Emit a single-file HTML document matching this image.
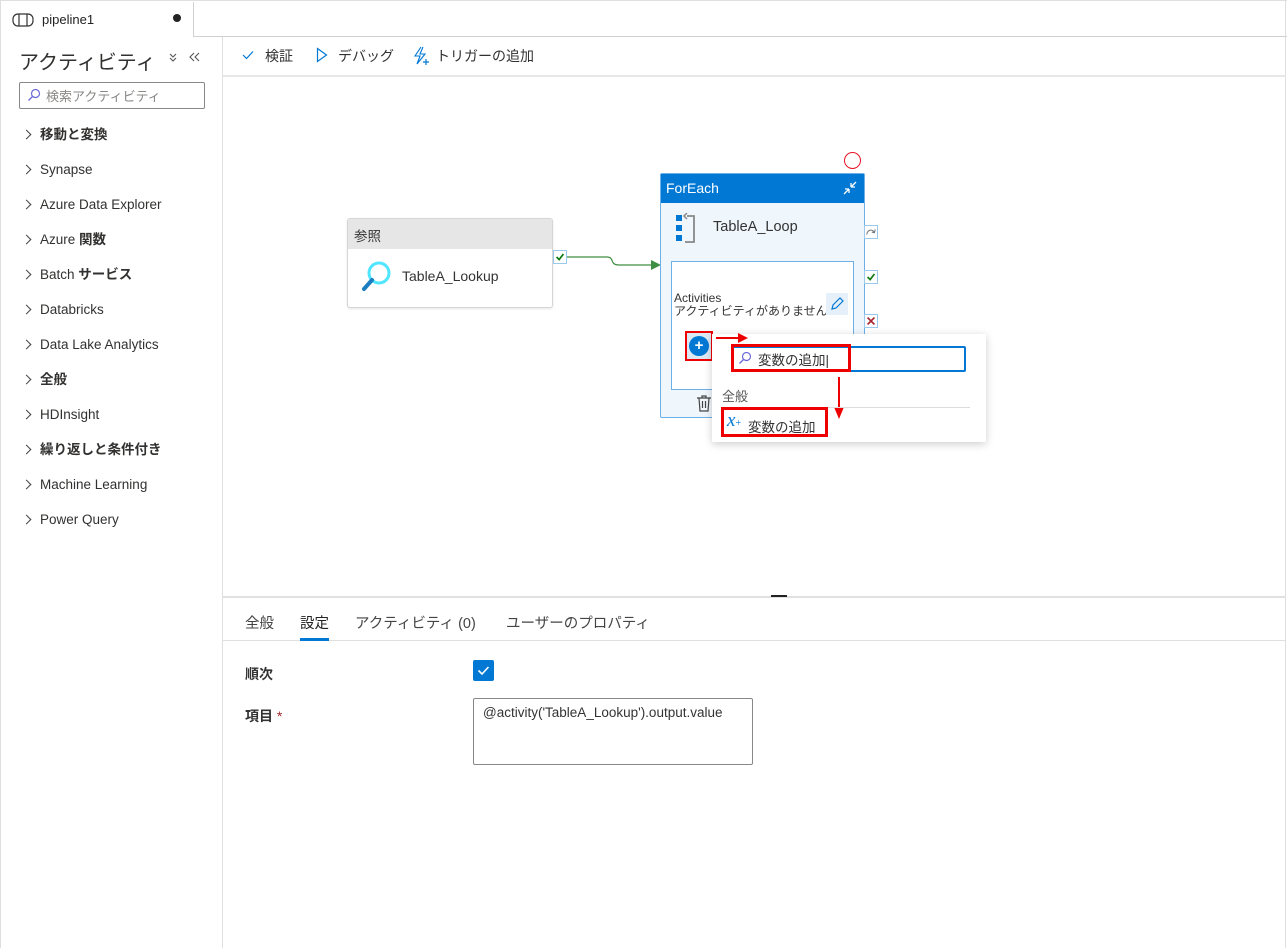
<!DOCTYPE html>
<html><head><meta charset="utf-8"><style>
*{box-sizing:border-box;margin:0;padding:0}
body{width:1287px;height:948px;background:#fff;font-family:"Liberation Sans","Noto Sans CJK JP",sans-serif;color:#323130;position:relative;overflow:hidden;font-size:14px}
.a{position:absolute}
.it{height:35px;line-height:35px;position:relative;padding-left:18px}
.it:before{content:"";position:absolute;left:1px;top:14px;width:6px;height:6px;border-right:1.3px solid #444;border-top:1.3px solid #444;transform:rotate(45deg)}
.cb{width:14px;height:14px;border:1px solid #9cc8ee;background:#fff}
</style></head><body>
<div class="a" style="left:0;top:0;width:1287px;height:1px;background:#e1dfdd"></div>
<div class="a" style="left:0;top:0;width:1px;height:948px;background:#e1dfdd"></div>
<div class="a" style="left:1285px;top:0;width:1px;height:948px;background:#e1dfdd"></div>
<div class="a" style="left:193px;top:36px;width:1094px;height:1px;background:#d0d0d0"></div>
<div class="a" style="left:193px;top:2px;width:1px;height:35px;background:#d0d0d0"></div>
<svg class="a" style="left:12px;top:13px" width="22" height="14" viewBox="0 0 22 14"><rect x="1" y="1" width="20" height="12" rx="5" fill="none" stroke="#333" stroke-width="1.2"/><line x1="7" y1="1" x2="7" y2="13" stroke="#333" stroke-width="1.2"/><line x1="15" y1="1" x2="15" y2="13" stroke="#333" stroke-width="1.2"/></svg>
<div class="a" style="left:42px;top:12px;font-size:13px;color:#222">pipeline1</div>
<div class="a" style="left:173px;top:14px;width:8px;height:8px;border-radius:50%;background:#222"></div>
<div class="a" style="left:222px;top:37px;width:1px;height:911px;background:#e1dfdd"></div>
<div class="a" style="left:19px;top:46px;font-size:20px;color:#323130">アクティビティ</div>
<svg class="a" style="left:167px;top:52px" width="12" height="12" viewBox="0 0 12 12"><path d="M3 2 L6 5 L9 2 M3 6 L6 9 L9 6" fill="none" stroke="#555" stroke-width="1.1"/></svg>
<svg class="a" style="left:187px;top:50px" width="14" height="14" viewBox="0 0 14 14"><path d="M7 3 L3 7 L7 11 M12 3 L8 7 L12 11" fill="none" stroke="#555" stroke-width="1.1"/></svg>
<div class="a" style="left:19px;top:82px;width:186px;height:27px;border:1px solid #8a8886;border-radius:2px"></div>
<svg class="a" style="left:27px;top:88px" width="14" height="14" viewBox="0 0 14 14"><circle cx="8.5" cy="5.5" r="4" fill="none" stroke="#6b69d6" stroke-width="1.2"/><line x1="5.5" y1="8.5" x2="1.5" y2="12.5" stroke="#6b69d6" stroke-width="1.3"/></svg>
<div class="a" style="left:46px;top:86px;font-size:13px;color:#8a8886">検索アクティビティ</div>
<div class="a" style="left:22px;top:117px;font-size:13.5px;color:#323130">
<div class="it"><b>移動と変換</b></div>
<div class="it">Synapse</div>
<div class="it">Azure Data Explorer</div>
<div class="it">Azure <b>関数</b></div>
<div class="it">Batch <b>サービス</b></div>
<div class="it">Databricks</div>
<div class="it">Data Lake Analytics</div>
<div class="it"><b>全般</b></div>
<div class="it">HDInsight</div>
<div class="it"><b>繰り返しと条件付き</b></div>
<div class="it">Machine Learning</div>
<div class="it">Power Query</div>
</div>
<div class="a" style="left:223px;top:75px;width:1063px;height:2px;background:#e8e8e8"></div>
<svg class="a" style="left:242px;top:50px" width="12" height="10" viewBox="0 0 12 10"><path d="M1 5 L4.5 8.5 L11 1.5" fill="none" stroke="#0078d4" stroke-width="1.2"/></svg>
<div class="a" style="left:265px;top:46px;font-size:14px">検証</div>
<svg class="a" style="left:316px;top:47px" width="12" height="16" viewBox="0 0 12 16"><path d="M1.5 1.5 L10.5 8 L1.5 14.5 Z" fill="none" stroke="#0078d4" stroke-width="1.2"/></svg>
<div class="a" style="left:338px;top:46px;font-size:14px">デバッグ</div>
<svg class="a" style="left:412px;top:46px" width="20" height="20" viewBox="0 0 20 20"><path d="M9 1 L3 10 L8 10 L5 18 L13 8 L8 8 L11 1" fill="none" stroke="#0078d4" stroke-width="1.1"/><path d="M14 13v6M11 16h6" stroke="#0078d4" stroke-width="1.2"/></svg>
<div class="a" style="left:436px;top:46px;font-size:14px">トリガーの追加</div>
<div class="a" style="left:347px;top:218px;width:206px;height:90px;border:1px solid #d6d6d6;border-radius:3px;background:#fff;box-shadow:0 1px 2px rgba(0,0,0,.1)">
<div style="height:30px;background:#e6e6e6;padding:6px 6px;font-size:13.5px;color:#333">参照</div>
</div>
<svg class="a" style="left:361px;top:260px" width="32" height="32" viewBox="0 0 32 32"><circle cx="18" cy="13" r="10" fill="none" stroke="#50e6ff" stroke-width="3"/><line x1="11" y1="20" x2="3" y2="29" stroke="#1b7fbf" stroke-width="4" stroke-linecap="round"/></svg>
<div class="a" style="left:402px;top:268px;font-size:14px;color:#333">TableA_Lookup</div>
<svg class="a cb" style="left:553px;top:250px" width="14" height="14" viewBox="0 0 14 14"><path d="M3 7 L6 10 L11 3.5" fill="none" stroke="#107c10" stroke-width="2"/></svg>
<svg class="a" style="left:567px;top:250px" width="96" height="20"><path d="M0 7 H40 C48 7 42 15 52 15 H86" fill="none" stroke="#3e8e41" stroke-width="1.2"/><path d="M84 10 L94 15 L84 20Z" fill="#3e8e41"/></svg>
<div class="a" style="left:844px;top:152px;width:17px;height:17px;border:1.5px solid #e81123;border-radius:50%"></div>
<div class="a" style="left:660px;top:173px;width:205px;height:245px;border:1px solid #6cb0e8;background:#eff6fc;border-radius:2px">
<div style="height:29px;background:#0078d4;color:#fff;font-size:14px;padding:6px 5px">ForEach</div>
</div>
<svg class="a" style="left:841px;top:179px" width="18" height="18" viewBox="0 0 18 18"><path d="M3 15 L8 10 M8 10 H4 M8 10 V14 M15 3 L10 8 M10 8 H14 M10 8 V4" stroke="#fff" stroke-width="1.3" fill="none"/></svg>
<svg class="a" style="left:675px;top:213px" width="24" height="32" viewBox="0 0 24 32"><rect x="1" y="2" width="6" height="6" fill="#0078d4"/><rect x="1" y="12" width="6" height="6" fill="#0078d4"/><rect x="1" y="22" width="6" height="6" fill="#0078d4"/><path d="M12 3 H19 V29 H10" fill="none" stroke="#888" stroke-width="1.8"/><path d="M12 0 L9 3 L12 6" fill="none" stroke="#888" stroke-width="1.5"/></svg>
<div class="a" style="left:713px;top:219px;font-size:14.5px;color:#333">TableA_Loop</div>
<div class="a" style="left:671px;top:261px;width:183px;height:129px;border:1px solid #6cb0e8;background:#fff"></div>
<div class="a" style="left:674px;top:292px;font-size:12px;color:#333;line-height:13px;width:166px;white-space:nowrap;overflow:hidden">Activities<br>アクティビティがありません</div>
<div class="a" style="left:826px;top:293px;width:22px;height:22px;background:#e6f0fa"></div>
<svg class="a" style="left:829px;top:296px" width="16" height="16" viewBox="0 0 16 16"><path d="M3 13 L4 9 L11 2 L14 5 L7 12 Z" fill="none" stroke="#0078d4" stroke-width="1.2"/></svg>
<svg class="a" style="left:696px;top:395px" width="16" height="17" viewBox="0 0 16 17"><path d="M1 3 H15 M6 3 V1 H10 V3 M3 3 L4 16 H12 L13 3 M6.5 6 V13 M9.5 6 V13" fill="none" stroke="#444" stroke-width="1.2"/></svg>
<svg class="a cb" style="left:864px;top:225px" width="14" height="14" viewBox="0 0 14 14"><path d="M2 10 C3 4 9 3 11 8 M11 8 L12 4 M11 8 L8 7" fill="none" stroke="#777" stroke-width="1.2"/></svg>
<svg class="a cb" style="left:864px;top:270px" width="14" height="14" viewBox="0 0 14 14"><path d="M3 7 L6 10 L11 3.5" fill="none" stroke="#107c10" stroke-width="2"/></svg>
<svg class="a cb" style="left:864px;top:314px" width="14" height="14" viewBox="0 0 14 14"><path d="M3 3 L11 11 M11 3 L3 11" fill="none" stroke="#a4262c" stroke-width="2"/></svg>
<div class="a" style="left:685px;top:331px;width:28px;height:30px;border:2px solid #e00;background:#dce8f4"></div>
<div class="a" style="left:689px;top:336px;width:20px;height:20px;border-radius:50%;background:#0078d4;color:#fff;text-align:center;font-weight:bold;font-size:15px;line-height:19px">+</div>
<div class="a" style="left:712px;top:334px;width:274px;height:108px;background:#fff;box-shadow:0 2px 8px rgba(0,0,0,.2)"></div>
<svg class="a" style="left:716px;top:331px" width="34" height="14"><path d="M0 7 H24" stroke="#e00" stroke-width="2"/><path d="M22 2 L32 7 L22 12Z" fill="#e00"/></svg>
<div class="a" style="left:731px;top:346px;width:235px;height:26px;border:2px solid #0078d4;border-radius:2px"></div>
<div class="a" style="left:731px;top:344px;width:120px;height:28px;border:3px solid #e00"></div>
<svg class="a" style="left:738px;top:351px" width="14" height="14" viewBox="0 0 14 14"><circle cx="8.5" cy="5.5" r="4" fill="none" stroke="#6b69d6" stroke-width="1.2"/><line x1="5.5" y1="8.5" x2="1.5" y2="12.5" stroke="#6b69d6" stroke-width="1.3"/></svg>
<div class="a" style="left:758px;top:349px;font-size:13.5px;color:#333">変数の追加|</div>
<svg class="a" style="left:833px;top:377px" width="12" height="44"><path d="M6 0 V32" stroke="#e00" stroke-width="2"/><path d="M1 30 L6 42 L11 30Z" fill="#e00"/></svg>
<div class="a" style="left:722px;top:386px;font-size:13px;color:#555">全般</div>
<div class="a" style="left:722px;top:407px;width:248px;height:1px;background:#ddd"></div>
<div class="a" style="left:721px;top:407px;width:107px;height:30px;border:3px solid #e00"></div>
<div class="a" style="left:727px;top:410px;font-family:'Liberation Serif',serif;font-style:italic;font-size:19px;color:#0078d4">x<span style="font-size:10px;font-style:normal">+</span></div>
<div class="a" style="left:748px;top:416px;font-size:13.5px;color:#333">変数の追加</div>
<div class="a" style="left:223px;top:596px;width:1063px;height:2px;background:#e1e1e1"></div>
<div class="a" style="left:771px;top:595px;width:16px;height:2px;background:#222"></div>
<div class="a" style="left:223px;top:640px;width:1063px;height:1px;background:#e1dfdd"></div>
<div class="a" style="left:245px;top:612px;font-size:14.5px;color:#444">全般</div>
<div class="a" style="left:300px;top:612px;font-size:14.5px;color:#222">設定</div>
<div class="a" style="left:300px;top:638px;width:29px;height:3px;background:#0078d4"></div>
<div class="a" style="left:355px;top:612px;font-size:14.5px;color:#444">アクティビティ (0)</div>
<div class="a" style="left:506px;top:612px;font-size:14.5px;color:#444">ユーザーのプロパティ</div>
<div class="a" style="left:245px;top:664px;font-size:14px;font-weight:bold;color:#333">順次</div>
<div class="a" style="left:473px;top:660px;width:21px;height:21px;background:#0078d4;border-radius:2px"></div>
<svg class="a" style="left:477px;top:665px" width="13" height="11" viewBox="0 0 13 11"><path d="M1.5 5.5 L5 9 L11.5 2" fill="none" stroke="#fff" stroke-width="1.6"/></svg>
<div class="a" style="left:245px;top:706px;font-size:14px;font-weight:bold;color:#333">項目 <span style="color:#a4262c;font-weight:normal">*</span></div>
<div class="a" style="left:473px;top:698px;width:280px;height:67px;border:1px solid #8a8886;border-radius:2px;padding:6px 9px;font-size:13.5px;color:#333">@activity('TableA_Lookup').output.value</div>
</body></html>
